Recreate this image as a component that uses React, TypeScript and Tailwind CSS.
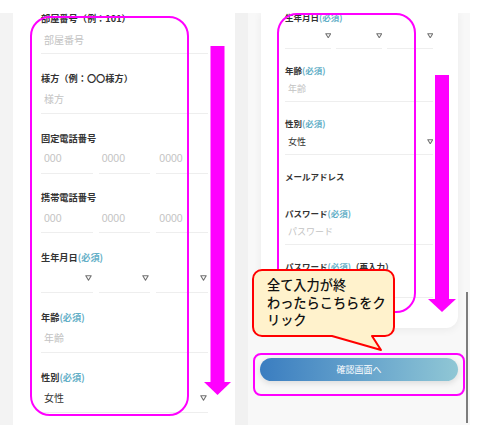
import type { ReactNode } from "react"

const Req = () => <span className="text-[#64afc7]">(必須)</span>

function Tri({ size = 7 }: { size?: number }) {
  return (
    <svg width={size} height={size - 1} viewBox="0 0 7 6" className="shrink-0">
      <path d="M0.8 0.8 H6.2 L3.5 5.2 Z" fill="none" stroke="#707070" strokeWidth="1.1" strokeLinejoin="round" />
    </svg>
  )
}

function LField({ label, children }: { label: ReactNode; children: ReactNode }) {
  return (
    <div className="mb-[17.8px]">
      <div className="h-[13px] text-[9.2px] leading-[13px] font-bold text-[#333]">{label}</div>
      {children}
    </div>
  )
}

function LInput({ text, dark }: { text: string; dark?: boolean }) {
  return (
    <div
      className={`flex h-[29px] items-center border-b border-[#eeeeee] pl-[3px] text-[10px] ${dark ? "text-[#333]" : "text-[#c3c3c3]"}`}
    >
      {text}
    </div>
  )
}

function LSelect({ text }: { text?: string }) {
  return (
    <div className="flex h-[29px] items-center justify-between border-b border-[#eeeeee] pl-[3px] pr-[1px] text-[10px] text-[#333]">
      <span>{text}</span>
      <Tri />
    </div>
  )
}

function RField({ label, children }: { label: ReactNode; children?: ReactNode }) {
  return (
    <div className={children ? "mb-[15px]" : "mb-[25px]"}>
      <div className="h-[12px] text-[8.5px] leading-[12px] font-bold text-[#333]">{label}</div>
      {children}
    </div>
  )
}

function RInput({ text }: { text: string }) {
  return (
    <div className="flex h-[26px] items-center border-b border-[#eeeeee] pl-[3px] text-[9px] text-[#c3c3c3]">
      {text}
    </div>
  )
}

function RSelect({ text }: { text?: string }) {
  return (
    <div className="flex h-[26px] items-center justify-between border-b border-[#eeeeee] pl-[3px] text-[9px] text-[#333]">
      <span>{text}</span>
      <Tri size={6.5} />
    </div>
  )
}

// digits in the phone placeholders are wider than the CJK face's
const Digits = ({ v }: { v: string }) => (
  <div className="flex h-[29px] items-center border-b border-[#eeeeee] pl-[3px] font-['Liberation_Sans',sans-serif] text-[10.5px] text-[#c3c3c3]">
    {v}
  </div>
)

function LeftPanel() {
  return (
    <div className="flex h-[412px] w-[235px] overflow-hidden">
      <div className="w-[13px] bg-[#f3f3f3]" />
      <div className="flex-1 bg-white pl-[28px] pr-[27px]">
        <div className="mt-[-1px]" />
        <LField label="部屋番号（例：101）">
          <LInput text="部屋番号" />
        </LField>
        <LField label="様方（例：〇〇様方）">
          <LInput text="様方" />
        </LField>
        <LField label="固定電話番号">
          <div className="grid grid-cols-3 gap-[6px]">
            <Digits v="000" />
            <Digits v="0000" />
            <Digits v="0000" />
          </div>
        </LField>
        <LField label="携帯電話番号">
          <div className="grid grid-cols-3 gap-[6px]">
            <Digits v="000" />
            <Digits v="0000" />
            <Digits v="0000" />
          </div>
        </LField>
        <LField label={<>生年月日<Req /></>}>
          <div className="grid grid-cols-3 gap-[6px]">
            <LSelect />
            <LSelect />
            <LSelect />
          </div>
        </LField>
        <LField label={<>年齢<Req /></>}>
          <LInput text="年齢" />
        </LField>
        <LField label={<>性別<Req /></>}>
          <LSelect text="女性" />
        </LField>
      </div>
    </div>
  )
}

function RightPanel() {
  return (
    <div className="flex h-[412px] w-[235px] overflow-hidden">
      <div className="w-[13px] bg-[#f1f1f1]" />
      <div className="flex-1 bg-[#f8f8f8]">
        <div className="ml-[13px] w-[197px] rounded-b-[12px] bg-white pb-[15px] pl-[24px] pr-[25px] shadow-[0_2px_8px_rgba(0,0,0,0.06)]">
          <div className="mt-[-2px]" />
          <RField label={<>生年月日<Req /></>}>
            <div className="grid grid-cols-3 gap-[5px]">
              <RSelect />
              <RSelect />
              <RSelect />
            </div>
          </RField>
          <RField label={<>年齢<Req /></>}>
            <RInput text="年齢" />
          </RField>
          <RField label={<>性別<Req /></>}>
            <RSelect text="女性" />
          </RField>
          <RField label="メールアドレス" />
          <RField label={<>パスワード<Req /></>}>
            <RInput text="パスワード" />
          </RField>
          <RField label={<>パスワード<Req />（再入力）</>}>
            <RInput text="パスワード" />
          </RField>
        </div>
        <div className="ml-[12px] mt-[30px] flex h-[23px] w-[198px] items-center justify-center rounded-full bg-linear-to-r from-[#3a7dc0] to-[#90c7d5] text-[9px] text-white shadow-[0_2px_6px_rgba(0,0,0,0.12)]">
          確認画面へ
        </div>
      </div>
    </div>
  )
}

function DownArrow({ w, h }: { w: number; h: number }) {
  const head = 13
  return (
    <svg width={w} height={h} viewBox={`0 0 ${w} ${h}`}>
      <rect x={(w - 14) / 2} y={0} width={14} height={h - head} fill="#ff00ff" />
      <polygon points={`0,${h - head} ${w},${h - head} ${w / 2},${h}`} fill="#ff00ff" />
    </svg>
  )
}

export default function App() {
  return (
    <div className="relative h-[438px] w-[479px] overflow-hidden bg-white font-['Noto_Sans_CJK_JP','Noto_Sans',sans-serif]">
      <div className="flex pt-[13px]">
        <LeftPanel />
        <RightPanel />
      </div>

      {/* scrollbar */}
      <div className="absolute left-[466px] top-[292px] h-[131px] w-[2px] bg-[#7d7d7d]" />

      {/* annotations */}
      <div className="absolute left-[30px] top-[16px] h-[400px] w-[159px] rounded-[20px] border-[2.5px] border-[#ff00ff]" />
      <div className="absolute left-[204px] top-[46px]">
        <DownArrow w={27} h={349} />
      </div>
      <div className="absolute left-[277px] top-[13px] h-[300px] w-[139px] rounded-[20px] border-[2.5px] border-[#ff00ff]" />
      <div className="absolute left-[428px] top-[75px]">
        <DownArrow w={28} h={237} />
      </div>
      <div className="absolute left-[253px] top-[353px] h-[43px] w-[212px] rounded-[8px] border-[2.5px] border-[#ff00ff]" />

      <div className="absolute left-[252px] top-[269px] h-[83px] w-[143px]">
        <svg width="143" height="83" viewBox="-1 -1 143 83" className="absolute inset-0">
          <path
            d="M9 0 H132 A9 9 0 0 1 141 9 V57 A9 9 0 0 1 132 66 H119 L128 80 L79 66 H9 A9 9 0 0 1 0 57 V9 A9 9 0 0 1 9 0 Z"
            fill="#fff2cc"
            stroke="#ff0000"
            strokeWidth="2"
            strokeLinejoin="round"
          />
        </svg>
        <div className="absolute left-[15px] top-[7px] text-[13.2px] leading-[17.5px] font-medium text-[#111]">
          全て入力が終
          <br />
          わったらこちらをク
          <br />
          リック
        </div>
      </div>
    </div>
  )
}
